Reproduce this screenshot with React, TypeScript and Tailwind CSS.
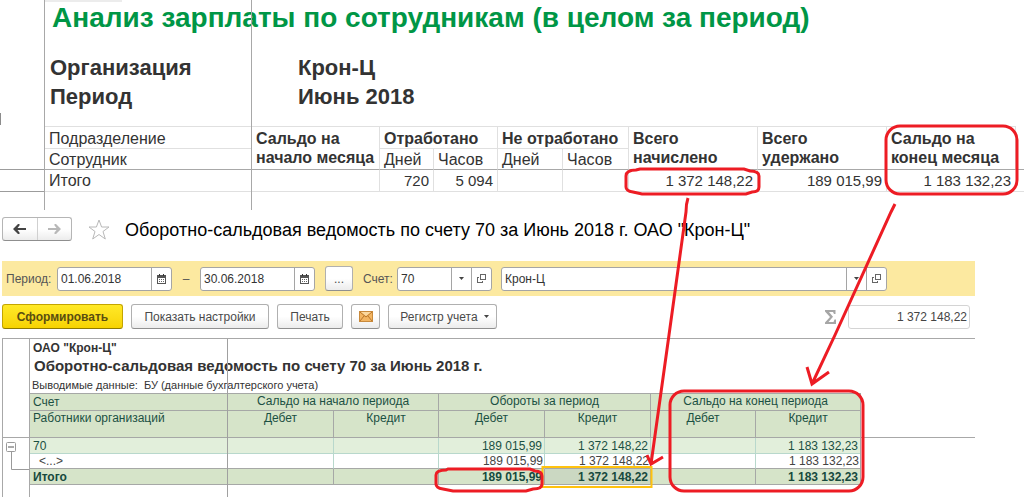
import React from "react";
import clsx from "clsx";

interface LedgerRow {
  name: string;
  kind: "account" | "detail" | "total";
  values: string[];
}

const ledgerRows: LedgerRow[] = [
  {
    name: "70",
    kind: "account",
    values: ["", "", "189 015,99", "1 372 148,22", "", "1 183 132,23"],
  },
  {
    name: "<...>",
    kind: "detail",
    values: ["", "", "189 015,99", "1 372 148,22", "", "1 183 132,23"],
  },
  {
    name: "Итого",
    kind: "total",
    values: ["", "", "189 015,99", "1 372 148,22", "", "1 183 132,23"],
  },
];

const CalendarIcon = () => (
  <svg width="9" height="10" viewBox="0 0 9 10" fill="none" shapeRendering="crispEdges">
    <path d="M0 1h9v3H0zM0 4h1v6H0zM8 4h1v6H8zM0 9h9v1H0z" fill="#555" />
    <path d="M2 0h1v2H2zM6 0h1v2H6z" fill="#333" />
    <path
      d="M2 5h1v1H2zM4 5h1v1H4zM6 5h1v1H6zM2 7h1v1H2zM4 7h1v1H4zM6 7h1v1H6z"
      fill="#666"
    />
  </svg>
);

const OpenIcon = () => (
  <svg width="9" height="9" viewBox="0 0 9 9" fill="none" stroke="#666" shapeRendering="crispEdges">
    <path d="M3.5 0.5h5v5h-5z" />
    <path d="M2 3.5H0.5v5h5V7" />
  </svg>
);

const CaretIcon = () => (
  <svg width="5" height="3" viewBox="0 0 5 3">
    <path d="M0 0h5L2.5 3z" fill="#444" />
  </svg>
);

const MailIcon = () => (
  <svg width="14" height="11" viewBox="0 0 14 11" fill="none">
    <rect x="0.5" y="0.5" width="13" height="10" fill="#f3b562" stroke="#c98a3c" />
    <path d="M1 1l6 5 6-5M1 10l4-5M13 10L9 5" stroke="#b9762b" />
    <path d="M2 1h10L7 5z" fill="#fbd9a0" />
  </svg>
);

const ArrowIcon = ({ color, flip }: { color: string; flip?: boolean }) => (
  <svg
    width="13"
    height="10"
    viewBox="0 0 13 10"
    fill={color}
    className={flip ? "rotate-180" : ""}
  >
    <path d="M0 5L5 0h1.500v1.500L4.500 4H13v2H4.500l2 2.500V10H5z" />
  </svg>
);

interface FieldProps {
  id: string;
  label: string;
  value: string;
  className?: string;
  children: React.ReactNode;
}

const Field: React.FC<FieldProps> = ({ id, label, value, className, children }) => (
  <div
    className={clsx(
      "flex h-6 overflow-hidden rounded-[3px] border border-[#a5a5a5] bg-white",
      className
    )}
  >
    <input
      id={id}
      aria-label={label}
      defaultValue={value}
      className="min-w-0 flex-1 px-[3px] text-xs text-[#333] outline-none"
    />
    {children}
  </div>
);

const FieldButton = ({ label, children }: { label: string; children: React.ReactNode }) => (
  <button
    type="button"
    aria-label={label}
    className="flex w-5 shrink-0 items-center justify-center border-l border-[#a5a5a5]"
  >
    {children}
  </button>
);

const toolButton =
  "flex h-[25px] items-center justify-center rounded-[3px] border border-[#b0b0b0] border-b-[#8f8f8f] bg-linear-to-b from-white from-50% to-[#ececec] text-xs text-[#4a4a4a]";

const SalarySheet = () => {
  const th = "border-l border-t border-[#e0e0e0] px-1 pt-[2px] text-left align-top";
  const td = "border-l border-b border-[#e0e0e0] px-1 text-right text-[15px]";

  return (
    <section className="relative flex h-[210px] text-[#333]">
      <div className="w-[45px] shrink-0 border-r border-[#a8a8a8]">
        <div className="h-[169px] pt-[113px]">
          <div className="h-3 w-px bg-[#8c8c8c]" />
        </div>
        <div className="h-[23px] border-y border-[#9c9c9c]" />
      </div>
      <div className="min-w-0 flex-1">
        <div className="h-[2px] w-[77px] bg-[#ececec]" />
        <h1 className="h-[51px] pl-[7px] text-[28px] leading-[32px] font-bold whitespace-nowrap text-[#009646]">
          Анализ зарплаты по сотрудникам (в целом за период)
        </h1>
        <dl className="grid h-[73px] grid-cols-[248px_1fr] content-start pl-[5px] text-[22px] leading-[29px] font-bold">
          <dt>Организация</dt>
          <dd>Крон-Ц</dd>
          <dt>Период</dt>
          <dd>Июнь 2018</dd>
        </dl>
        <table className="w-full table-fixed border-separate border-spacing-0 text-base leading-[19px] whitespace-nowrap">
          <colgroup>
            <col className="w-[206px]" />
            <col className="w-[128px]" />
            <col className="w-[54px]" />
            <col className="w-[64px]" />
            <col className="w-[65px]" />
            <col className="w-[66px]" />
            <col className="w-[129px]" />
            <col className="w-[129px]" />
            <col className="w-[129px]" />
            <col />
          </colgroup>
          <thead>
            <tr className="h-[22px]">
              <th className="border-t border-[#e0e0e0] px-1 pt-[2px] text-left font-normal">
                Подразделение
              </th>
              <th rowSpan={2} className={clsx(th, "border-b border-b-[#a8a8a8]")}>
                Сальдо на
                <br />
                начало месяца
              </th>
              <th colSpan={2} className={th}>
                Отработано
              </th>
              <th colSpan={2} className={th}>
                Не отработано
              </th>
              <th rowSpan={2} className={clsx(th, "border-b border-b-[#a8a8a8]")}>
                Всего
                <br />
                начислено
              </th>
              <th rowSpan={2} className={clsx(th, "border-b border-b-[#a8a8a8]")}>
                Всего
                <br />
                удержано
              </th>
              <th rowSpan={2} className={clsx(th, "border-b border-b-[#a8a8a8]")}>
                Сальдо на
                <br />
                конец месяца
              </th>
              <td rowSpan={2} className="border-b border-l border-[#a8a8a8] border-l-[#e0e0e0]" />
            </tr>
            <tr className="h-[22px]">
              <th className="border-t border-b border-[#e0e0e0] border-b-[#a8a8a8] px-1 pt-px text-left font-normal">
                Сотрудник
              </th>
              {["Дней", "Часов", "Дней", "Часов"].map((label, i) => (
                <th
                  key={i}
                  className="border-t border-b border-l border-[#e0e0e0] border-b-[#a8a8a8] px-1 pt-px text-left font-normal"
                >
                  {label}
                </th>
              ))}
            </tr>
          </thead>
          <tbody>
            <tr className="h-[22px]">
              <td className="border-b border-[#e0e0e0] px-1">Итого</td>
              {["", "720", "5 094", "", "", "1 372 148,22", "189 015,99", "1 183 132,23"].map(
                (value, i) => (
                  <td key={i} className={td}>
                    {value}
                  </td>
                )
              )}
              <td className="border-b border-[#e0e0e0]" />
            </tr>
          </tbody>
        </table>
      </div>
      {/* frozen column edge */}
      <div className="absolute inset-y-0 left-[251px] w-px bg-[#a8a8a8]" />
    </section>
  );
};

const FilterBar = () => (
  <div className="flex h-[35px] items-center bg-[#fce9a0] pl-1 text-xs text-[#555]">
    <label htmlFor="date-from" className="w-[51px]">
      Период:
    </label>
    <Field id="date-from" label="Начало периода" value="01.06.2018" className="w-[115px]">
      <FieldButton label="Выбрать дату начала">
        <CalendarIcon />
      </FieldButton>
    </Field>
    <span className="w-7 text-center">–</span>
    <Field id="date-to" label="Конец периода" value="30.06.2018" className="w-[115px]">
      <FieldButton label="Выбрать дату конца">
        <CalendarIcon />
      </FieldButton>
    </Field>
    <button type="button" className={clsx(toolButton, "ml-[10px] w-7")}>
      ...
    </button>
    <label htmlFor="account" className="ml-[10px] w-[34px]">
      Счет:
    </label>
    <Field id="account" label="Счет" value="70" className="w-[95px]">
      <FieldButton label="Список счетов">
        <CaretIcon />
      </FieldButton>
      <FieldButton label="Открыть счет">
        <OpenIcon />
      </FieldButton>
    </Field>
    <Field id="company" label="Организация" value="Крон-Ц" className="mr-[88px] ml-[9px] flex-1">
      <FieldButton label="Список организаций">
        <CaretIcon />
      </FieldButton>
      <FieldButton label="Открыть организацию">
        <OpenIcon />
      </FieldButton>
    </Field>
  </div>
);

const Toolbar = () => (
  <div className="mt-2 flex items-center gap-2">
    <button
      type="button"
      className="h-[25px] w-[121px] rounded-[3px] border border-[#c4a500] border-b-[#8f7a00] bg-linear-to-b from-[#ffe926] to-[#f7d300] text-xs font-bold text-[#5a4d10]"
    >
      Сформировать
    </button>
    <button type="button" className={clsx(toolButton, "w-[138px]")}>
      Показать настройки
    </button>
    <button type="button" className={clsx(toolButton, "w-[66px]")}>
      Печать
    </button>
    <button type="button" aria-label="Отправить по почте" className={clsx(toolButton, "w-[29px]")}>
      <MailIcon />
    </button>
    <button type="button" className={clsx(toolButton, "w-[109px] gap-[6px] pl-1")}>
      Регистр учета
      <CaretIcon />
    </button>
    <label htmlFor="sum" aria-label="Сумма" className="ml-auto">
      <svg width="12" height="14" viewBox="0 0 12 14" fill="#a6a6a6">
        <path d="M0 0h10.500v4H9L8 2H4l4 4.800L3.500 12H8.500L9.500 9.500H11V14H0v-1.500L5 7 0 1.500z" />
      </svg>
    </label>
    <input
      id="sum"
      readOnly
      value="1 372 148,22"
      className="mr-[5px] ml-[3px] h-6 w-[122px] rounded-[3px] border border-[#d4d4d4] px-[2px] text-right text-xs text-[#444]"
    />
  </div>
);

const LedgerSheet = () => {
  const th = "border-t border-l border-[#a6a8a6] text-center align-top font-normal";

  return (
    <div className="relative mt-[9px] flex h-[159px] border-t border-l border-[#a8a8a8]">
      <div className="w-[27px] shrink-0 border-r border-[#a8a8a8]">
        <div className="h-[99px] border-b border-[#a8a8a8]" />
        <svg width="26" height="34" viewBox="0 0 26 34" fill="none" stroke="#9a9a9a">
          <rect x="3.500" y="4.500" width="9" height="9" rx="1" fill="#fff" />
          <path d="M5 9h6" stroke="#555" />
          <path d="M8.500 14v17.500H26" />
        </svg>
      </div>
      <div className="min-w-0 flex-1 text-xs text-[#333]">
        <p className="h-[18px] pl-[3px] leading-[18px] font-bold">ОАО "Крон-Ц"</p>
        <h3 className="h-[18px] pl-1 text-[15px] leading-[18px] font-bold whitespace-nowrap">
          Оборотно-сальдовая ведомость по счету 70 за Июнь 2018 г.
        </h3>
        <p className="h-[18px] pl-[2px] text-[11px] leading-5">
          Выводимые данные:&nbsp; БУ (данные бухгалтерского учета)
        </p>
        <div className="relative">
          <div className="absolute inset-x-0 top-[44px] h-px bg-[#a8a8a8]" />
          <table className="relative w-[831px] table-fixed border-separate border-spacing-0 border-r border-[#a6a8a6] leading-[14px]">
            <colgroup>
              <col className="w-[197px]" />
              <col className="w-[106px]" />
              <col className="w-[105px]" />
              <col className="w-[106px]" />
              <col className="w-[106px]" />
              <col className="w-[105px]" />
              <col className="w-[105px]" />
            </colgroup>
            <thead className="bg-[#d6e4c9] text-[#1b5043]">
              <tr className="h-[17px]">
                <th className="border-t border-[#a6a8a6] px-[3px] text-left font-normal">Счет</th>
                <th colSpan={2} className={th}>
                  Сальдо на начало периода
                </th>
                <th colSpan={2} className={th}>
                  Обороты за период
                </th>
                <th colSpan={2} className={th}>
                  Сальдо на конец периода
                </th>
              </tr>
              <tr className="h-7">
                <th className="border-t border-b border-[#a6a8a6] px-[3px] text-left align-top font-normal">
                  Работники организаций
                </th>
                {["Дебет", "Кредит", "Дебет", "Кредит", "Дебет", "Кредит"].map((label, i) => (
                  <th key={i} className={clsx(th, "border-b")}>
                    {label}
                  </th>
                ))}
              </tr>
            </thead>
            <tbody>
              {ledgerRows.map((row) => (
                <tr
                  key={row.kind}
                  className={clsx(
                    row.kind === "account" && "h-4 bg-[#e2efdb] text-[#1b5043]",
                    row.kind === "detail" && "h-[15px] text-[#444]",
                    row.kind === "total" && "h-4 bg-[#d6e4c9] font-bold text-[#174a3e]"
                  )}
                >
                  <td
                    className={clsx(
                      "border-b",
                      row.kind === "account" ? "border-[#b8d8cc]" : "border-[#a6a8a6]",
                      row.kind === "detail" ? "pl-[9px]" : "pl-[3px]"
                    )}
                  >
                    {row.name}
                  </td>
                  {row.values.map((value, i) => (
                    <td
                      key={i}
                      className={clsx(
                        "border-b border-l text-right",
                        row.kind === "detail" ? "pr-px" : "pr-[2px]",
                        row.kind === "account" && "border-[#b8d8cc]",
                        row.kind === "detail" && "border-b-[#a6a8a6] border-l-[#b8d8cc]",
                        row.kind === "total" && "border-[#a6a8a6]",
                        row.kind === "total" && i === 3 && "bg-[#cbd8c2]"
                      )}
                    >
                      {value}
                    </td>
                  ))}
                </tr>
              ))}
            </tbody>
          </table>
        </div>
      </div>
      {/* frozen column edge */}
      <div className="absolute inset-y-0 left-[224px] w-px bg-[#a0a0a0]" />
    </div>
  );
};

const Annotations = () => (
  <svg
    className="pointer-events-none absolute top-0 left-0"
    width="1024"
    height="497"
    viewBox="0 0 1024 497"
    fill="none"
    stroke="#ed1c24"
    strokeWidth="3"
  >
    <rect x="542.500" y="467" width="109" height="20" stroke="#ffc20e" strokeWidth="2" />
    <path d="M636 170Q626 170 626 176V187Q626 191 633 192L642 194H746L752 192Q759 192 759 187V176Q759 171 750 171L744 169H640Z" />
    <rect x="886" y="126" width="131" height="68" rx="14" />
    <path d="M446 470Q436 470 436 475V484Q436 488 443 489L453 491H526L533 489Q542 489 542 484V476Q542 471 535 471L530 469H448Z" />
    <rect x="670" y="391" width="193" height="100" rx="14" />
    <path d="M688 198Q686 204 686 212L669 335L651 464M647 455L651 464L663 457" />
    <path d="M895 204L891 212L835 335L812 384M807 367L812 384L829 372" />
  </svg>
);

export default function App() {
  return (
    <main className="relative overflow-hidden bg-white font-['Liberation_Sans',Arial,sans-serif]">
      <SalarySheet />
      <section className="pr-[49px] pl-[2px]">
        <header className="flex h-[51px] items-start pt-[7px]">
          <div className="flex h-6 w-[70px] rounded-[3px] border border-[#b5b5b5] border-b-[#8f8f8f] bg-linear-to-b from-white from-50% to-[#ececec]">
            <button
              type="button"
              aria-label="Назад"
              className="flex flex-1 items-center justify-center border-r border-[#d0d0d0]"
            >
              <ArrowIcon color="#444" />
            </button>
            <button
              type="button"
              aria-label="Вперед"
              className="flex flex-1 items-center justify-center"
            >
              <ArrowIcon color="#b8b8b8" flip />
            </button>
          </div>
          <button type="button" aria-label="В избранное" className="ml-4 pt-[2px]">
            <svg width="22" height="21" viewBox="0 0 22 21" fill="none" stroke="#b8b8b8">
              <path d="M11 1l2.600 7H21l-6 4.500 2.300 7.500L11 15.500 4.700 20 7 12.500 1 8h7.400z" />
            </svg>
          </button>
          <h2 className="ml-[15px] text-lg leading-[26px] whitespace-nowrap text-black">
            Оборотно-сальдовая ведомость по счету 70 за Июнь 2018 г. ОАО "Крон-Ц"
          </h2>
        </header>
        <FilterBar />
        <Toolbar />
        <LedgerSheet />
      </section>
      <Annotations />
    </main>
  );
}
